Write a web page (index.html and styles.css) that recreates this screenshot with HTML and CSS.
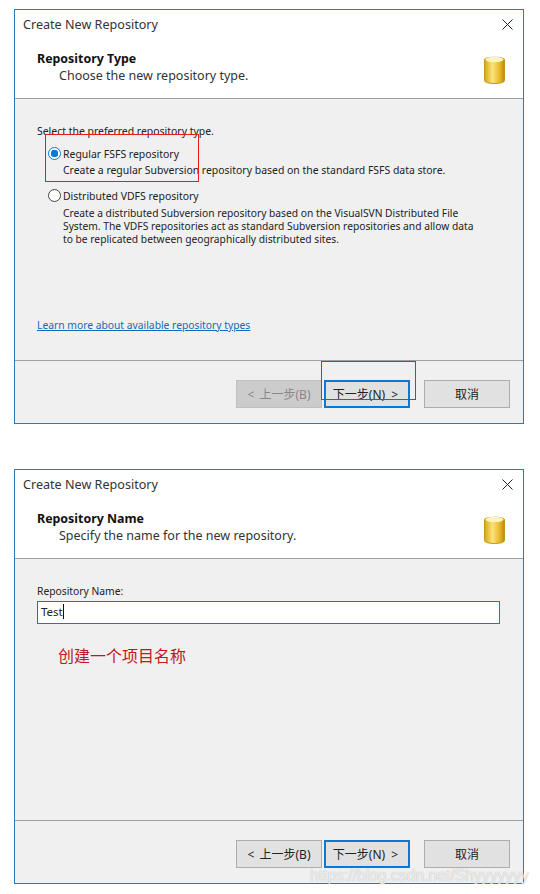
FILE: index.html
```html
<!DOCTYPE html>
<html lang="en">
<head>
  <meta charset="UTF-8">
  <meta name="viewport" content="width=device-width, initial-scale=1.0">
  <title>Create New Repository</title>
  <link rel="stylesheet" href="styles.css">
</head>
<body>
  <div class="page">

    <!-- step 1: type -->
    <div class="dialog">
      <div class="titlebar">
        <span class="title">Create New Repository</span>
        <svg class="close" width="11" height="11" viewBox="0 0 11 11"><path d="M.5.5l10 10M10.5.5l-10 10" stroke="#222" stroke-width="1" fill="none"/></svg>
      </div>
      <div class="head">
        <div class="head-text">
          <div class="head-title">Repository Type</div>
          <div class="head-sub">Choose the new repository type.</div>
        </div>
        <svg class="db" width="21" height="30" viewBox="0 0 22 30" preserveAspectRatio="none">
          <defs>
            <linearGradient id="dbSide" x1="0" x2="1" y1="0" y2="0">
              <stop offset="0" stop-color="#d9a514"/>
              <stop offset=".4" stop-color="#fbe27a"/>
              <stop offset=".75" stop-color="#e8b92a"/>
              <stop offset="1" stop-color="#b98a0c"/>
            </linearGradient>
          </defs>
          <path d="M.5 4.5C.5 1.5 21.5 1.5 21.5 4.5V25.500C21.500 29.500.5 29.500.5 25.500Z" fill="url(#dbSide)" stroke="#c2960f"/>
          <ellipse cx="11" cy="4.500" rx="9.500" ry="2.800" fill="#fdf3c0"/>
        </svg>
      </div>
      <div class="body">
        <div class="body-label">Select the preferred repository type.</div>
        <div class="option option-first">
          <span class="radio radio-on"></span>
          <div class="option-text">
            <div class="option-name">Regular FSFS repository</div>
            <div class="option-desc">Create a regular Subversion repository based on the standard FSFS data store.</div>
          </div>
        </div>
        <div class="option">
          <span class="radio"></span>
          <div class="option-text">
            <div class="option-name">Distributed VDFS repository</div>
            <div class="option-desc option-long">Create a distributed Subversion repository based on the VisualSVN Distributed File System. The VDFS repositories act as standard Subversion repositories and allow data to be replicated between geographically distributed sites.</div>
          </div>
        </div>
        <a class="more" href="#">Learn more about available repository types</a>
      </div>
      <div class="footer">
        <button class="btn btn-off">&lt; 上一步(B)</button>
        <button class="btn btn-next">下一步(N) &gt;</button>
        <button class="btn btn-cancel">取消</button>
      </div>
      <div class="mark mark-option"></div>
      <div class="mark mark-next"></div>
    </div>

    <!-- step 2: name -->
    <div class="dialog">
      <div class="titlebar">
        <span class="title">Create New Repository</span>
        <svg class="close" width="11" height="11" viewBox="0 0 11 11"><path d="M.5.5l10 10M10.5.5l-10 10" stroke="#222" stroke-width="1" fill="none"/></svg>
      </div>
      <div class="head">
        <div class="head-text">
          <div class="head-title">Repository Name</div>
          <div class="head-sub">Specify the name for the new repository.</div>
        </div>
        <svg class="db" width="21" height="30" viewBox="0 0 22 30" preserveAspectRatio="none">
          <path d="M.5 4.5C.5 1.5 21.5 1.5 21.5 4.5V25.500C21.500 29.500.5 29.500.5 25.500Z" fill="url(#dbSide)" stroke="#c2960f"/>
          <ellipse cx="11" cy="4.500" rx="9.500" ry="2.800" fill="#fdf3c0"/>
        </svg>
      </div>
      <div class="body">
        <div class="field-label">Repository Name:</div>
        <div class="field"><span>Test</span><i class="caret"></i></div>
        <div class="note">创建一个项目名称</div>
      </div>
      <div class="footer">
        <button class="btn">&lt; 上一步(B)</button>
        <button class="btn btn-next">下一步(N) &gt;</button>
        <button class="btn btn-cancel">取消</button>
      </div>
    </div>

    <div class="watermark">https://blog.csdn.net/Shyyyyyyy</div>
  </div>
</body>
</html>
```

FILE: styles.css
```css
body {
  margin: 0;
  background: #fff;
  font-family: "Noto Sans", "Noto Sans CJK SC", sans-serif;
  font-size: 10.45px;
  color: #222;
}

.page {
  position: relative;
  width: 540px;
  height: 894px;
  padding: 9px 0 0 14px;
  box-sizing: border-box;
  overflow: hidden;
}

.dialog {
  position: relative;
  display: flex;
  flex-direction: column;
  width: 510px;
  height: 415px;
  margin-bottom: 45px;
  box-sizing: border-box;
  border: 1px solid #2a7ab8;
  background: #f0f0f0;
}

.titlebar {
  display: flex;
  justify-content: space-between;
  align-items: center;
  height: 30px;
  padding: 0 10px 2px 8px;
  box-sizing: border-box;
  background: #fff;
}

.title {
  font-size: 12.6px;
  color: #333;
}

.head {
  display: flex;
  justify-content: space-between;
  height: 58px;
  padding: 0 18px 0 22px;
  background: #fff;
  border-bottom: 1px solid #a0a0a0;
}

.head-title {
  margin-top: 10px;
  font-size: 12.4px;
  line-height: 17px;
  font-weight: 700;
  color: #111;
}

.head-sub {
  padding-left: 22px;
  font-size: 12.5px;
  line-height: 17px;
  color: #333;
}

.db {
  margin-top: 15px;
}

.body {
  flex: 1;
  display: flex;
  flex-direction: column;
  padding: 0 22px;
  border-bottom: 1px solid #a0a0a0;
}

.body-label {
  margin-top: 25px;
  line-height: 14px;
}

.option {
  display: flex;
  gap: 2px;
  margin: 12px 0 0 11px;
}

.option-first {
  margin-top: 9px;
}

.radio {
  flex: none;
  width: 13px;
  height: 13px;
  box-sizing: border-box;
  border: 1px solid #444;
  border-radius: 50%;
  background: #fff;
}

.radio-on {
  border-color: #0a78d7;
  background: radial-gradient(circle, #0a78d7 0 3.5px, #fff 4px);
}

.option-name {
  line-height: 15px;
}

.option-desc {
  margin-top: 2px;
  line-height: 13px;
}

.option-long {
  margin-top: 3px;
  width: 420px;
  font-size: 10.25px;
}

.more {
  margin-top: auto;
  margin-bottom: 28px;
  font-size: 10.3px;
  color: #0f6cbd;
  line-height: 14px;
}

.footer {
  display: flex;
  height: 62px;
  padding: 19px 13px 0 221px;
  box-sizing: border-box;
}

.btn {
  width: 86px;
  height: 28px;
  padding: 0;
  font: inherit;
  font-size: 12px;
  word-spacing: 2px;
  color: #222;
  background: #e1e1e1;
  border: 1px solid #adadad;
}

.btn-off {
  color: #888;
  background: #cccccc;
  border-color: #bfbfbf;
}

.btn-next {
  margin-left: 2px;
  padding-right: 3px;
  word-spacing: 3px;
  border: 2px solid #0a78d7;
}

.btn-cancel {
  margin-left: 14px;
}

.field-label {
  margin-top: 25px;
  font-size: 10.3px;
  line-height: 14px;
}

.field {
  display: flex;
  align-items: center;
  width: 463px;
  height: 23px;
  margin-top: 3px;
  padding: 0 0 2px 3px;
  box-sizing: border-box;
  font-size: 11.5px;
  background: #fff;
  border: 1px solid #1f78b4;
}

.caret {
  width: 1px;
  height: 15px;
  background: #111;
}

.note {
  margin: 21px 0 0 21px;
  font-size: 16px;
  line-height: 22px;
  color: #c8141c;
}

.mark {
  position: absolute;
  box-sizing: border-box;
  border: 1px solid #e81c1c;
}

.mark-option {
  left: 30px;
  top: 124px;
  width: 154px;
  height: 48px;
}

.mark-next {
  left: 306px;
  top: 351px;
  width: 95px;
  height: 39px;
  border-color: #f01c1c;
}

.watermark {
  position: absolute;
  left: 310px;
  top: 867px;
  font-family: "Liberation Sans", sans-serif;
  font-size: 15.7px;
  line-height: 18px;
  color: rgba(255, 255, 255, .75);
  text-shadow: 0 0 1px rgba(120, 120, 120, .6);
}
```
